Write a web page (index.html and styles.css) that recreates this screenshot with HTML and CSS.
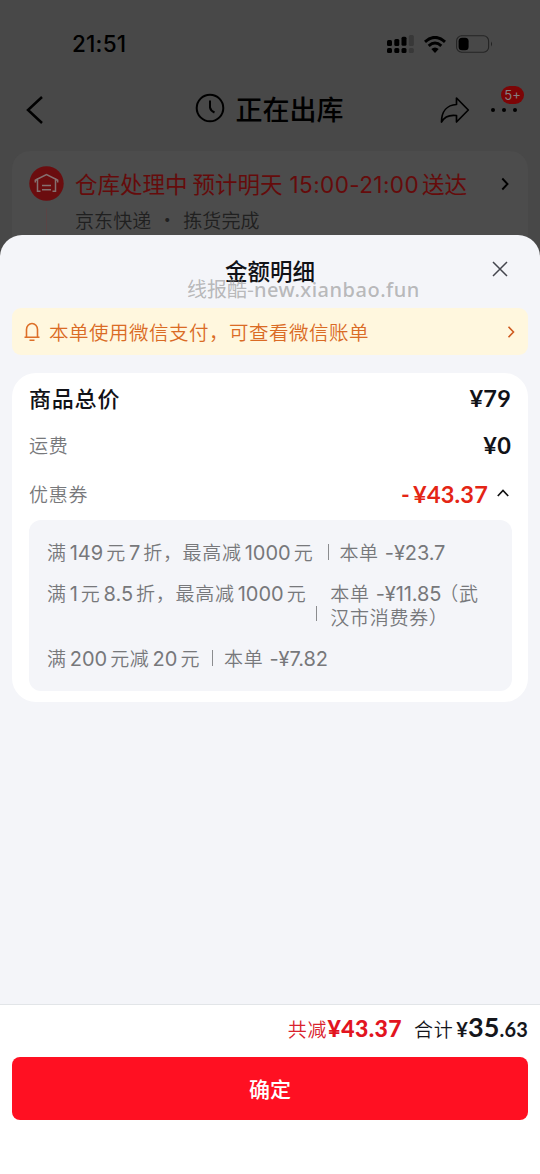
FILE: index.html
```html
<!DOCTYPE html>
<html lang="zh-CN">
<head>
<meta charset="utf-8">
<title>金额明细</title>
<link rel="stylesheet" href="styles.css">
</head>
<body>
<div class="screen">
  <div class="order">
    <div class="status">
      <span class="time">21:51</span>
      <div class="status-icons">
        <svg width="27" height="18" viewBox="0 0 27 18"><g fill="#000"><rect x="0" y="5" width="5" height="6" rx="1.5"/><rect x="7.3" y="4" width="5" height="7" rx="1.5"/><rect x="14.5" y="1.8" width="5" height="9" rx="1.5"/><rect x="0" y="13" width="5" height="5" rx="1.5"/><rect x="7.3" y="13" width="5" height="5" rx="1.5"/><rect x="14.5" y="13" width="5" height="5" rx="1.5"/></g><g fill="#383838"><rect x="21.8" y="0" width="5" height="11" rx="1.5"/><rect x="21.8" y="13" width="5" height="5" rx="1.5"/></g></svg>
        <svg class="wifi" width="22" height="17" viewBox="0 0 22 17"><g fill="none" stroke="#000" stroke-width="3"><path d="M1 5.8Q11-3 21 5.8"/><path d="M4.7 9.8Q11 4.2 17.3 9.8"/></g><path d="M11 17L7.3 13Q11 9.8 14.7 13Z"/></svg>
        <svg class="battery" width="37" height="18" viewBox="0 0 37 18"><rect x=".6" y=".8" width="32" height="16.4" rx="5" fill="none" stroke="#242424" stroke-width="1.1"/><rect x="2.6" y="2.8" width="10" height="12.4" rx="3.5"/><path d="M35 6.5Q37 9 35 11.5Z" fill="#222"/></svg>
      </div>
    </div>
    <div class="nav">
      <svg class="back" width="18" height="30" viewBox="0 0 18 30"><path d="M16 2L2 15L16 28" fill="none" stroke="#000" stroke-width="2.5"/></svg>
      <div class="nav-title">
        <svg width="30" height="30" viewBox="0 0 30 30"><g fill="none" stroke="#000" stroke-width="2"><circle cx="15" cy="15" r="13.3"/><path d="M15 7.5V14.5Q15.5 17.5 19.5 19.5"/></g></svg>
        <span>正在出库</span>
      </div>
      <div class="nav-actions">
        <svg width="30" height="28" viewBox="0 0 30 28"><path d="M16.5 2L28.3 14L16.5 26V19.5C9 18.5 4.5 20.5 1.5 26C1.5 15.5 7 9 16.5 8.5Z" fill="none" stroke="#000" stroke-width="1.7" stroke-linejoin="round"/></svg>
        <div class="more"><i></i><i></i><i></i><b class="badge">5+</b></div>
      </div>
    </div>
    <div class="delivery">
      <div class="track">
        <svg width="35" height="35" viewBox="0 0 35 35"><circle cx="17.5" cy="17.5" r="17.2" fill="#6b0d0f"/><g fill="none" stroke="#857070" stroke-width="1.5"><path d="M11.5 25.2H8.5V13L17.5 8.5L26.5 13V25.2H23.5M8.5 13L6.3 14.2V16.5M26.5 13L28.7 14.2V16.5"/><path d="M13 19.5H22M13 23.7H22"/></g></svg>
        <div class="track-line"></div>
      </div>
      <div class="delivery-text">
        <div class="delivery-title">仓库处理中 预计明天<span class="eta">15:00-21:00</span>送达</div>
        <div class="delivery-sub">京东快递 <em>·</em> 拣货完成</div>
      </div>
      <svg class="go" width="8" height="14" viewBox="0 0 8 14"><path d="M1.3 1.5L6.5 7L1.3 12.5" fill="none" stroke="#000" stroke-width="1.9"/></svg>
    </div>
  </div>

  <div class="sheet">
    <div class="sheet-head">
      <h1>金额明细</h1>
      <svg class="close" width="16" height="16" viewBox="0 0 16 16"><path d="M1 1L15 15M15 1L1 15" stroke="#44464e" stroke-width="1.5"/></svg>
      <div class="watermark">线报酷-<span>new.xianbao.fun</span></div>
    </div>
    <div class="notice">
      <svg width="16" height="20" viewBox="0 0 16 20"><g fill="none" stroke="#dd6f28" stroke-width="1.6"><path d="M2.5 15.2V7.5A5.5 6 0 0 1 13.5 7.5V15.2M.5 15.2H15.5M5.5 18.3H10.5"/></g></svg>
      <span>本单使用微信支付，可查看微信账单</span>
      <svg class="notice-go" width="8" height="12" viewBox="0 0 8 12"><path d="M1.5 .8L6.5 6L1.5 11.2" fill="none" stroke="#cf5b20" stroke-width="1.6"/></svg>
    </div>
    <div class="card">
      <div class="row total"><span class="strong">商品总价</span><span class="price">¥79</span></div>
      <div class="row freight"><span>运费</span><span class="price">¥0</span></div>
      <div class="row coupon"><span>优惠券</span><span class="price red"><span class="minus">-</span>¥43.37</span>
        <svg width="12" height="8" viewBox="0 0 12 8"><path d="M.8 7L6 1.5L11.2 7" fill="none" stroke="#111" stroke-width="1.7"/></svg></div>
      <div class="coupons">
        <div class="item"><span>满<b>149</b>元<b>7</b>折，最高减<b>1000</b>元</span><i></i><span>本单<b class="amt">-¥23.7</b></span></div>
        <div class="item tall"><span>满<b>1</b>元<b>8.5</b>折，最高减<b>1000</b>元</span><i></i><span>本单<b class="amt">-¥11.85</b><u>（</u>武<br>汉市消费券）</span></div>
        <div class="item last"><span>满<b>200</b>元减<b>20</b>元</span><i></i><span>本单<b class="amt">-¥7.82</b></span></div>
      </div>
    </div>
  </div>

  <div class="footer">
    <div class="summary">
      <span class="saved">共减<b>¥43.37</b></span>
      <span class="sum">合计<b>¥<strong>35</strong>.63</b></span>
    </div>
    <button class="confirm">确定</button>
  </div>
</div>
</body>
</html>
```
FILE: styles.css
```css
* { box-sizing: border-box; }
body { margin: 0; font-family: "Noto Sans CJK SC", sans-serif; }
svg { display: block; flex: none; }
.screen { width: 540px; height: 1174px; display: flex; flex-direction: column; overflow: hidden; background: #484848; }

.order { height: 255px; flex: none; overflow: hidden; padding-top: 30px; }
.status { height: 28px; display: flex; align-items: center; justify-content: space-between; padding: 0 47px 0 72px; }
.time { font: 500 22.5px/28px Inter, sans-serif; letter-spacing: .2px; color: #000; }
.status-icons { display: flex; align-items: center; }
.wifi { margin-left: 10px; }
.battery { margin-left: 10px; }
.nav { height: 93px; padding: 10px 23px 0 26px; display: grid; grid-template-columns: 100px 1fr 100px; align-items: center; }
.nav-title { display: flex; align-items: center; justify-content: center; gap: 11px; padding-right: 5px; font-size: 27px; font-weight: 500; line-height: 40px; color: #000; }
.nav-title svg { margin-top: -3px; }
.nav-title span { margin-top: -2px; }
.nav-actions { display: flex; align-items: center; justify-content: flex-end; gap: 21px; }
.more { position: relative; width: 26px; display: flex; justify-content: space-between; }
.more i { width: 4px; height: 4px; border-radius: 50%; background: #000; }
.badge { position: absolute; left: 10px; top: -22px; width: 23px; height: 18px; border-radius: 9px; background: #7c0506; color: #858080; font: 400 13px/18px Inter, sans-serif; text-align: center; }
.delivery { height: 110px; margin: 0 12px; padding: 15px 19px 0 17px; display: flex; border-radius: 18px; background: #4c4c4c; }
.track { display: flex; flex-direction: column; align-items: center; gap: 7px; }
.track-line { width: 1px; height: 40px; background: #5a4445; }
.delivery-text { flex: 1; margin: -1px 0 0 11px; }
.delivery-title { font-size: 22.5px; line-height: 36px; color: #650b0b; white-space: nowrap; }
.eta { font: 400 22.5px/36px Inter, sans-serif; letter-spacing: .4px; margin: 0 3px 0 7px; }
.delivery-sub { font-size: 19px; font-weight: 350; line-height: 34px; letter-spacing: .1px; color: #202020; }
.delivery-sub em { font-style: normal; margin: 0 2px; }
.go { margin-top: 11px; }

.sheet { flex: 1; margin-top: -20px; border-radius: 22px 22px 0 0; background: #f4f5f9; padding: 0 12px; }
.sheet-head { position: relative; height: 73px; display: flex; justify-content: center; }
.sheet-head h1 { margin: 18px 0 0; font-size: 22.5px; line-height: 35px; font-weight: 500; color: #111217; }
.close { position: absolute; right: 20px; top: 26px; }
.watermark { position: absolute; left: 175px; top: 39px; font-size: 20px; line-height: 30px; color: rgba(145,145,145,.62); white-space: nowrap; }
.watermark span { font-family: "Noto Sans", sans-serif; font-weight: 500; letter-spacing: .5px; }
.notice { height: 47px; padding: 0 13px 0 12px; display: flex; align-items: center; border-radius: 9px; background: #fff7de; font-size: 19.5px; font-weight: 350; letter-spacing: .5px; color: #da6b25; }
.notice span { flex: 1; margin-left: 9px; }
.card { height: 329px; margin-top: 18px; padding: 0 16px 0 17px; border-radius: 24px; background: #fff; }
.row { display: flex; align-items: center; font-size: 19px; font-weight: 350; letter-spacing: .8px; color: #77787b; }
.row > span:first-child { flex: 1; }
.total { height: 48px; }
.freight { height: 46px; }
.coupon { height: 53px; }
.row .strong { font-size: 22px; letter-spacing: .8px; font-weight: 500; color: #111217; }
.price { font: 700 23.5px/30px Lato, sans-serif; letter-spacing: .2px; color: #111217; padding: 1px 1px 0 0; }
.red { color: #e42515; margin-right: 8px; }
.coupon svg { margin-right: 3px; margin-top: -2px; }
.minus { margin-right: 3px; }
.coupons { height: 171px; border-radius: 12px; background: #f4f5f9; padding: 19px 18px 0; }
.item { display: flex; align-items: center; font-size: 19px; font-weight: 350; line-height: 25px; letter-spacing: .7px; color: #77787b; margin-bottom: 17px; }
.item span { flex: none; }
.item.tall { align-items: flex-start; line-height: 24px; margin-bottom: 16px; }
.item b { font: 400 20px/20px Inter, sans-serif; letter-spacing: 0; margin: 0 3px; }
.item .amt { margin: 0 0 0 6px; letter-spacing: -.1px; }
.item i { width: 1px; height: 16px; margin: 0 10px 0 15px; background: #8b8c8f; }
.item.tall i { margin: 25px 13px 0 10px; height: 15px; }
.item.last i { margin: 0 11px 0 12px; }
.item u { text-decoration: none; margin-left: -2px; }

.footer { height: 170px; flex: none; background: #fff; border-top: 1px solid #e2e5e8; padding: 0 12px; }
.summary { height: 52px; padding-top: 5px; display: flex; justify-content: flex-end; align-items: baseline; font-size: 19px; font-weight: 350; line-height: 32px; }
.saved { color: #d9222d; letter-spacing: .9px; }
.saved b { font: 900 23px Lato, sans-serif; letter-spacing: .4px; color: #e2141f; }
.sum { margin-left: 12px; color: #15161b; letter-spacing: .6px; }
.sum b { font: 700 20px Lato, sans-serif; letter-spacing: .2px; margin-left: 3px; }
.sum strong { font-size: 27px; font-weight: 700; letter-spacing: 0; }
.confirm { display: block; width: 516px; height: 63px; padding: 0 0 2px; border: 0; border-radius: 8px; background: #ff1022; color: #fff; font: 500 21px "Noto Sans CJK SC", sans-serif; }
```
